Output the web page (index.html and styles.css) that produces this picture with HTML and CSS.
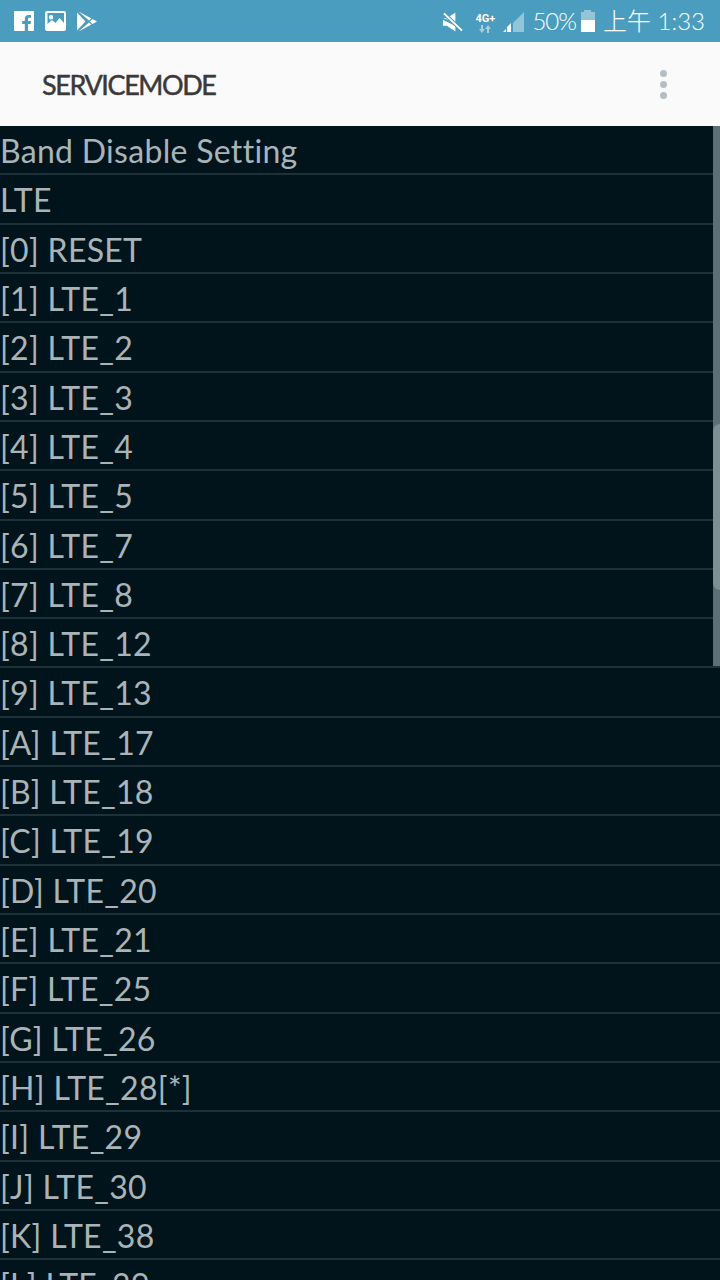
FILE: index.html
```html
<!DOCTYPE html>
<html lang="zh">
<head>
<meta charset="utf-8">
<title>ServiceMode</title>
<link rel="stylesheet" href="styles.css">
</head>
<body>
<div class="screen">
  <header class="status">
    <div class="status-left">
      <svg class="ic" width="20" height="20" viewBox="0 0 20 20"><path fill="#fff" d="M1 0h18a1 1 0 0 1 1 1v18a1 1 0 0 1-1 1h-5v-7h2.600l.4-3h-3V8.200c0-.9.3-1.400 1.400-1.400H17V4.100c-.4 0-1.300-.1-2.300-.1-2.300 0-3.900 1.400-3.900 4V10H8.200v3h2.600v7H1a1 1 0 0 1-1-1V1a1 1 0 0 1 1-1z"/></svg>
      <svg class="ic" width="21" height="20" viewBox="0 0 21 20"><path fill="#fff" fill-rule="evenodd" d="M2 0h17a2 2 0 0 1 2 2v16a2 2 0 0 1-2 2H2a2 2 0 0 1-2-2V2a2 2 0 0 1 2-2zm.5 2v11l4.500-4 3.500 3 4-5 4.500 5V2zM6 4a2.200 2.200 0 1 1 0 4.400A2.200 2.200 0 0 1 6 4z"/></svg>
      <svg class="ic" width="20" height="21" viewBox="0 0 20 21"><path fill="#fff" d="M0 1.500l8.500 9L0 19.500zM1.500 .5l13 7-2.500 2zM12.800 10.500l2.700-2.400 4.500 2.400-4.500 2.400zM1.500 20.500l10.500-9 2.500 2z"/></svg>
    </div>
    <div class="status-right">
      <svg class="mute" width="21" height="20" viewBox="0 0 22 20"><path fill="#fff" d="M1 6h4l9-6v10zM14 14v6l-9-6H1V8z"/><path stroke="#4a9dbe" stroke-width="4" d="M1 0l20 19"/><path stroke="#fff" stroke-width="2" d="M2 1l19 18"/></svg>
      <div class="net">
        <span class="net-label">4G+</span>
        <svg class="net-arrows" width="13" height="8" viewBox="0 0 13 8"><path fill="#a9cfde" d="M2 0h2v4h2L3 8 0 4h2zM10 8H8V4H6l3-4 3 4h-2z"/></svg>
      </div>
      <svg class="signal" width="21" height="20" viewBox="0 0 21 20"><path fill="#93c5d8" d="M21 0v20H10V11z"/><path fill="#fff" d="M0 20l3-3v3zM4 20v-5l4-4v9z"/></svg>
      <span class="stat-text pct">50%</span>
      <div class="battery"><span class="battery-cap"></span><span class="battery-level"></span></div>
      <span class="stat-text clock">上午 1:33</span>
    </div>
  </header>
  <div class="appbar">
    <h1 class="title">SERVICEMODE</h1>
    <div class="more"><i></i><i></i><i></i></div>
  </div>
  <main class="list">
    <div class="row">Band Disable Setting</div>
    <div class="row">LTE</div>
    <div class="row">[0] RESET</div>
    <div class="row">[1] LTE_1</div>
    <div class="row">[2] LTE_2</div>
    <div class="row">[3] LTE_3</div>
    <div class="row">[4] LTE_4</div>
    <div class="row">[5] LTE_5</div>
    <div class="row">[6] LTE_7</div>
    <div class="row">[7] LTE_8</div>
    <div class="row">[8] LTE_12</div>
    <div class="row">[9] LTE_13</div>
    <div class="row">[A] LTE_17</div>
    <div class="row">[B] LTE_18</div>
    <div class="row">[C] LTE_19</div>
    <div class="row">[D] LTE_20</div>
    <div class="row">[E] LTE_21</div>
    <div class="row">[F] LTE_25</div>
    <div class="row">[G] LTE_26</div>
    <div class="row">[H] LTE_28[*]</div>
    <div class="row">[I] LTE_29</div>
    <div class="row">[J] LTE_30</div>
    <div class="row">[K] LTE_38</div>
    <div class="row">[L] LTE_39</div>
    <div class="scrollbar"><div class="thumb"></div></div>
  </main>
</div>
</body>
</html>
```
FILE: styles.css
```css
* { box-sizing: border-box; }
html, body { margin: 0; padding: 0; }
body { width: 720px; height: 1280px; overflow: hidden; background: #01141c; font-family: "Lato", "Noto Sans CJK SC", sans-serif; }
.screen { width: 720px; height: 1280px; overflow: hidden; display: flex; flex-direction: column; }
.status { height: 42px; flex: none; background: #4a9dbe; display: flex; justify-content: space-between; align-items: center; padding: 0 15px 0 14px; }
.status-left { display: flex; align-items: center; gap: 11px; }
.status-right { display: flex; align-items: center; }
.ic { display: block; }
.mute { display: block; margin: 2px 11px 0 0; }
.net { display: flex; flex-direction: column; align-items: center; width: 22px; margin: 3px 7px 0 0; }
.net-label { font: 700 11px/11px "Roboto", sans-serif; color: #fff; }
.net-arrows { display: block; margin-top: 1px; }
.signal { display: block; margin: 2px 8px 0 0; }
.stat-text { color: #fff; font-weight: 300; line-height: 28px; }
.pct { font-size: 24px; letter-spacing: -1px; }
.battery { width: 14px; height: 22px; margin: 0 8px 0 5px; display: flex; flex-direction: column; align-items: center; }
.battery-cap { width: 7px; height: 2px; background: #93c5d8; flex: none; }
.battery-level { width: 14px; height: 20px; background: linear-gradient(#93c5d8 0 40%, #fff 40%); }
.clock { font-size: 24px; }
.appbar { height: 84px; flex: none; background: #fafafa; display: flex; justify-content: space-between; align-items: center; padding: 0 53px 0 42px; }
.title { margin: 0; font-size: 27px; font-weight: 400; color: #3a3a3a; letter-spacing: -1.4px; -webkit-text-stroke: 0.5px #3a3a3a; }
.more { display: flex; flex-direction: column; gap: 4px; }
.more i { display: block; width: 7px; height: 7px; border-radius: 50%; background: #b4bfc5; }
.list { position: relative; flex: 1; overflow: hidden; }
.row { height: 49.32px; line-height: 49px; border-bottom: 2px solid #1f3138; color: #aab4b8; font-size: 32px; font-weight: 400; letter-spacing: 0.3px; white-space: nowrap; }
.scrollbar { position: absolute; top: 0; right: 0; width: 7px; height: 540px; background: #5d6f76; }
.thumb { position: absolute; top: 298px; left: 0; width: 7px; height: 166px; background: #7e8e93; border-radius: 7px 0 0 7px; }
```
